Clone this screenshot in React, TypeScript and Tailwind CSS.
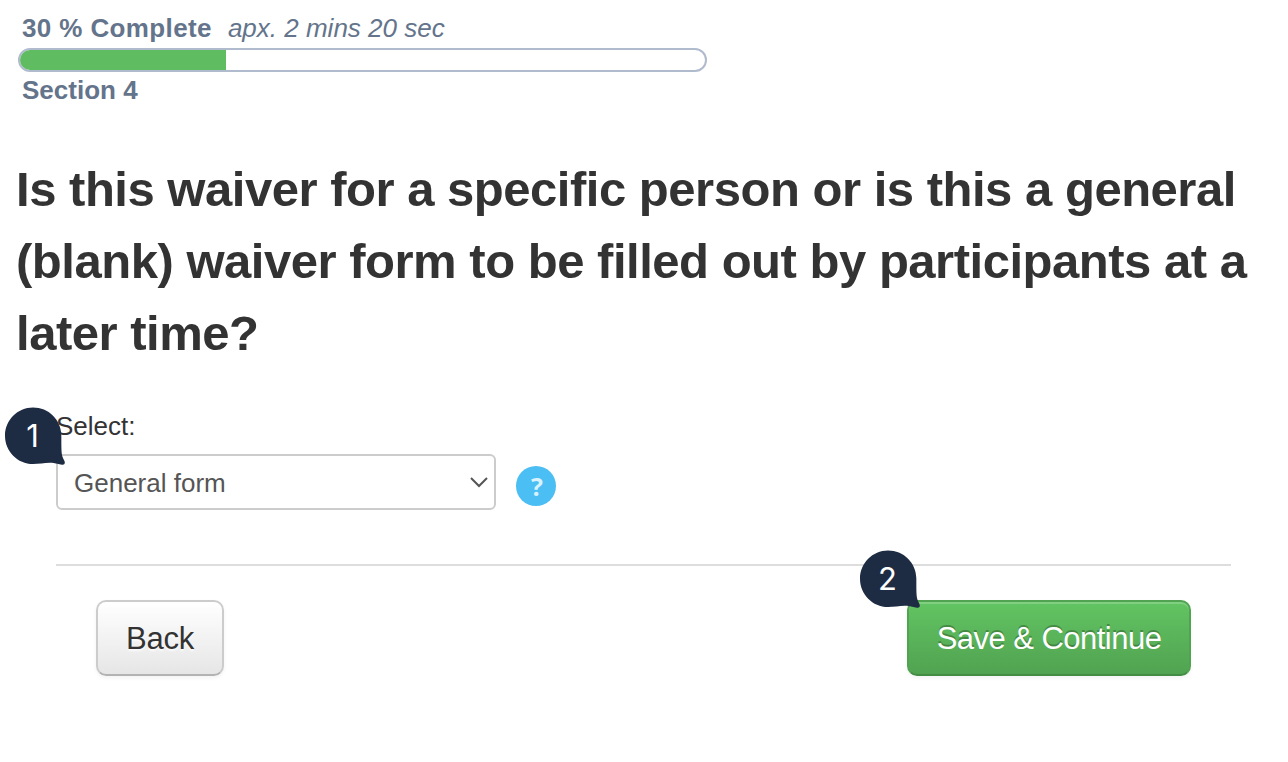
function Marker({ label, className }: { label: string; className: string }) {
  return (
    <div className={`absolute h-[58px] w-[60px] ${className}`}>
      <svg viewBox="0 0 60 58" className="absolute inset-0 h-full w-full" aria-hidden="true">
        <path
          d="M28 .5C43.5 .5 56 12.5 56.3 28C56.5 35 56 45 57.4 49.5C58 51.8 59.5 53.3 59.8 55.2C60 57.3 58.7 58.1 57 57.8C53.5 57.4 51 56.2 47 55.8C41.5 55.3 34 57 28 57C12.5 57 0 44.3 0 28.7C0 13 12.5 .5 28 .5Z"
          fill="#1d2b43"
        />
      </svg>
      <span className="relative block w-[55px] text-center font-['Inter',sans-serif] text-[31px] leading-[57px] text-white">
        {label}
      </span>
    </div>
  );
}

export default function App() {
  return (
    <main className="h-[762px] w-[1288px] overflow-hidden bg-white font-['Liberation_Sans',Arial,sans-serif] text-[#333]">
      <header className="flex flex-col pl-[18px] pt-2 text-[26px] leading-10 text-[#64748b]">
        <div className="flex h-10 gap-[16px] pl-1 whitespace-nowrap">
          <strong className="tracking-[0.38px]">30 % Complete</strong>
          <em>apx. 2 mins 20 sec</em>
        </div>
        <div className="h-6 w-[689px] overflow-hidden rounded-full border-2 border-[#b0bbce]">
          <div className="h-full w-[206px] bg-[#5fbc60]" />
        </div>
        <strong className="h-10 pl-1 leading-[37px]">Section 4</strong>
      </header>

      <h1 className="mt-[41px] pl-4 text-[49px] font-bold leading-[72px] tracking-[-0.48px] whitespace-nowrap">
        <span className="block">Is this waiver for a specific person or is this a general</span>
        <span className="block">(blank) waiver form to be filled out by participants at a</span>
        <span className="block">later time?</span>
      </h1>

      <section className="relative ml-14 mt-[37px] w-[1175px]">
        <label className="block h-[48px] text-[26px] leading-[40px]">Select:</label>
        <div className="flex items-center gap-5">
          <button className="flex h-14 w-[440px] items-center justify-between rounded-md border-2 border-[#ccc] bg-white pl-4 pr-1.5 text-[26px] text-[#555]">
            <span className="pt-0.5">General form</span>
            <svg width="18" height="11" viewBox="0 0 18 11" fill="none" stroke="#555" strokeWidth="2" aria-hidden="true">
              <path d="M1 1L9 9L17 1" />
            </svg>
          </button>
          <span className="mt-2 flex size-10 items-center justify-center rounded-full bg-[#4bbef3] pl-0.5 pt-0.5 font-['Open_Sans',sans-serif] text-[25px] font-bold text-[#d9f2ff]">
            ?
          </span>
        </div>
        <Marker label="1" className="-left-[51px] top-px" />
      </section>

      <footer className="relative ml-14 mt-[54px] flex w-[1175px] justify-between border-t-2 border-[#ddd] px-10 pt-[34px] text-[31px]">
        <button className="h-[76px] w-32 rounded-[10px] border-2 border-[#ccc] border-b-[#b3b3b3] bg-linear-to-b from-white to-[#e6e6e6] pt-0.5 tracking-[-0.2px] shadow-[inset_0_2px_0_rgba(255,255,255,.2),0_2px_4px_rgba(0,0,0,.05)] [text-shadow:0_2px_2px_rgba(255,255,255,.75)]">
          Back
        </button>
        <button className="h-[76px] w-[284px] rounded-[10px] border-2 border-[#51a351] border-b-[#438c43] bg-linear-to-b from-[#62c462] to-[#51a351] pt-0.5 tracking-[-0.53px] text-white shadow-[inset_0_2px_0_rgba(255,255,255,.2),0_2px_4px_rgba(0,0,0,.05)] [text-shadow:0_-2px_0_rgba(0,0,0,.25)]">
          Save &amp; Continue
        </button>
        <Marker label="2" className="left-[804px] -top-[16px]" />
      </footer>
    </main>
  );
}
